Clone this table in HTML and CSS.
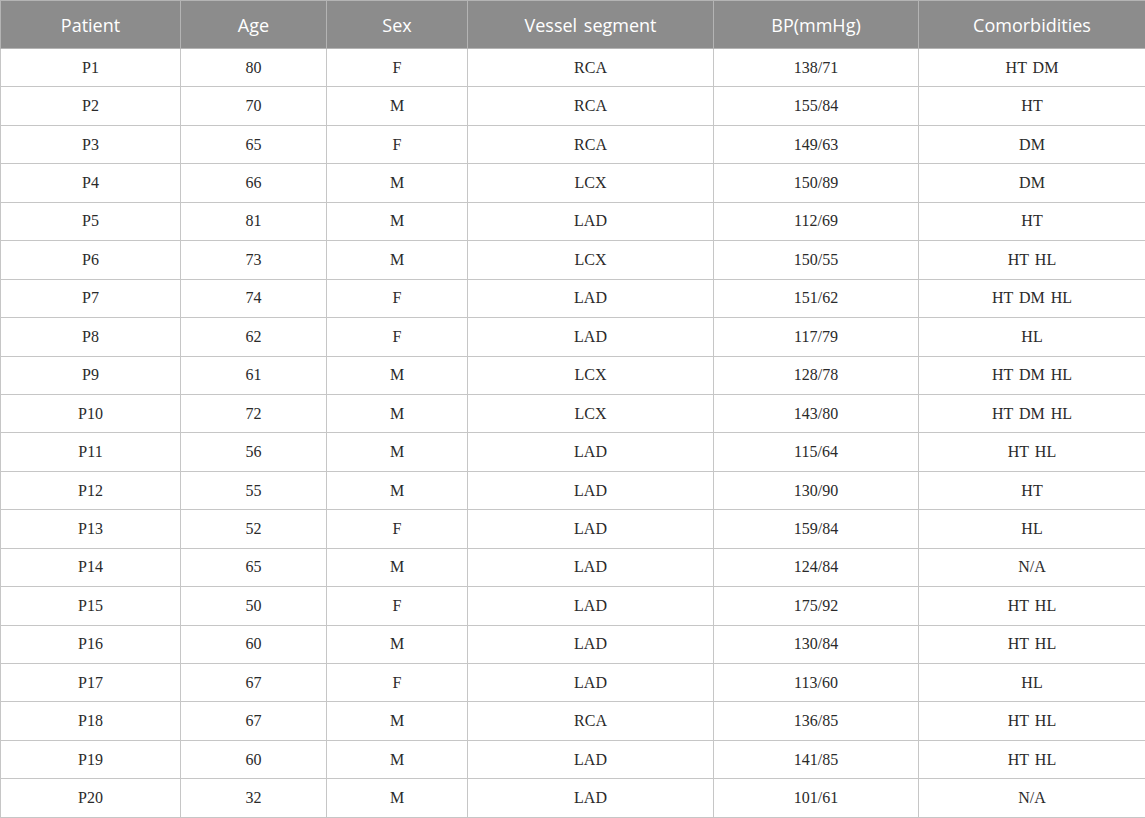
FILE: index.html
```html
<!DOCTYPE html>
<html lang="en">
<head>
<meta charset="utf-8">
<link rel="stylesheet" href="styles.css">
</head>
<body>
<table class="data">
<colgroup>
<col class="c1"><col class="c2"><col class="c3"><col class="c4"><col class="c5"><col class="c6">
</colgroup>
<thead>
<tr><th>Patient</th><th>Age</th><th>Sex</th><th>Vessel segment</th><th>BP(mmHg)</th><th>Comorbidities</th></tr>
</thead>
<tbody>
<tr><td>P1</td><td>80</td><td>F</td><td>RCA</td><td>138/71</td><td>HT DM</td></tr>
<tr><td>P2</td><td>70</td><td>M</td><td>RCA</td><td>155/84</td><td>HT</td></tr>
<tr><td>P3</td><td>65</td><td>F</td><td>RCA</td><td>149/63</td><td>DM</td></tr>
<tr><td>P4</td><td>66</td><td>M</td><td>LCX</td><td>150/89</td><td>DM</td></tr>
<tr><td>P5</td><td>81</td><td>M</td><td>LAD</td><td>112/69</td><td>HT</td></tr>
<tr><td>P6</td><td>73</td><td>M</td><td>LCX</td><td>150/55</td><td>HT HL</td></tr>
<tr><td>P7</td><td>74</td><td>F</td><td>LAD</td><td>151/62</td><td>HT DM HL</td></tr>
<tr><td>P8</td><td>62</td><td>F</td><td>LAD</td><td>117/79</td><td>HL</td></tr>
<tr><td>P9</td><td>61</td><td>M</td><td>LCX</td><td>128/78</td><td>HT DM HL</td></tr>
<tr><td>P10</td><td>72</td><td>M</td><td>LCX</td><td>143/80</td><td>HT DM HL</td></tr>
<tr><td>P11</td><td>56</td><td>M</td><td>LAD</td><td>115/64</td><td>HT HL</td></tr>
<tr><td>P12</td><td>55</td><td>M</td><td>LAD</td><td>130/90</td><td>HT</td></tr>
<tr><td>P13</td><td>52</td><td>F</td><td>LAD</td><td>159/84</td><td>HL</td></tr>
<tr><td>P14</td><td>65</td><td>M</td><td>LAD</td><td>124/84</td><td>N/A</td></tr>
<tr><td>P15</td><td>50</td><td>F</td><td>LAD</td><td>175/92</td><td>HT HL</td></tr>
<tr><td>P16</td><td>60</td><td>M</td><td>LAD</td><td>130/84</td><td>HT HL</td></tr>
<tr><td>P17</td><td>67</td><td>F</td><td>LAD</td><td>113/60</td><td>HL</td></tr>
<tr><td>P18</td><td>67</td><td>M</td><td>RCA</td><td>136/85</td><td>HT HL</td></tr>
<tr><td>P19</td><td>60</td><td>M</td><td>LAD</td><td>141/85</td><td>HT HL</td></tr>
<tr><td>P20</td><td>32</td><td>M</td><td>LAD</td><td>101/61</td><td>N/A</td></tr>
</tbody>
</table>
</body>
</html>
```
FILE: styles.css
```css
html, body {
  margin: 0;
  padding: 0;
  background: #ffffff;
}
.data {
  width: 1145px;
  border-collapse: collapse;
  table-layout: fixed;
}
.c1 { width: 180px; }
.c2 { width: 146px; }
.c3 { width: 141px; }
.c4 { width: 246px; }
.c5 { width: 205px; }
.c6 { width: 227px; }
.data th {
  background: #8c8c8c;
  color: #ffffff;
  font-family: "Open Sans", "Liberation Sans", sans-serif;
  font-weight: 400;
  font-size: 18px;
  word-spacing: 2px;
  height: 48px;
  padding: 0;
  border: 1px solid #b4b4b4;
  text-align: center;
  vertical-align: middle;
  box-sizing: border-box;
}
.data td {
  font-family: "Liberation Serif", "Times New Roman", serif;
  font-size: 16px;
  word-spacing: 2px;
  color: #2a2a2a;
  height: 38.45px;
  padding: 0;
  border: 1px solid #c6c6c6;
  text-align: center;
  vertical-align: middle;
  box-sizing: border-box;
}
```
